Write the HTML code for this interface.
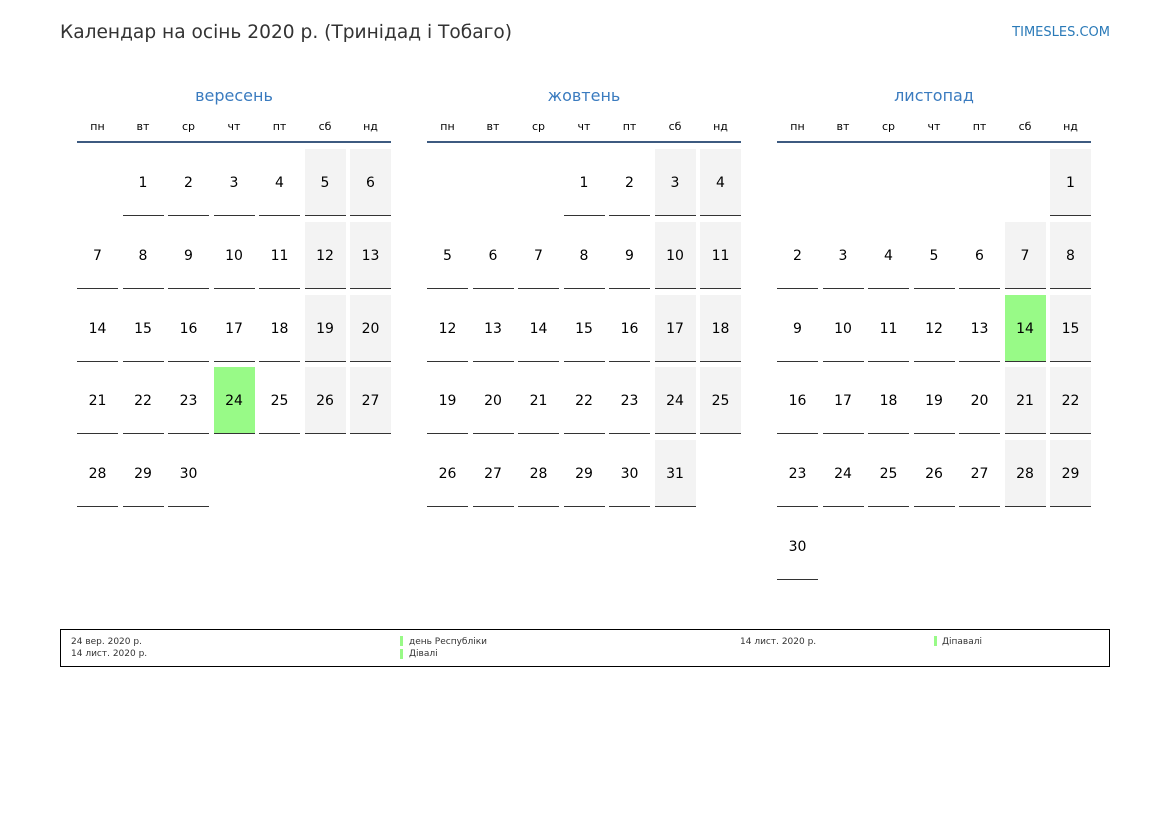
<!DOCTYPE html><html><head><meta charset="utf-8"><style>
body{margin:0;width:1169px;height:827px;background:#fff;font-family:"DejaVu Sans","Liberation Sans",sans-serif;position:relative;overflow:hidden;color:#000}
.t{position:absolute;left:60px;top:22px;font-size:18.6px;color:#333}
.l{position:absolute;right:59px;top:25px;font-size:13px;color:#2a7ab8}
.m{position:absolute;top:85px;width:314px}
.mn{text-align:center;font-size:16px;color:#3a7bbf;height:22px;line-height:22px}
.dh{display:grid;grid-template-columns:repeat(7,41px);column-gap:4.5px;margin-top:11px;font-size:11px;text-align:center;height:17px;border-bottom:2px solid #3d5a80;padding-bottom:6px;line-height:17px}
.g{display:grid;grid-template-columns:repeat(7,41px);column-gap:4.5px;grid-auto-rows:67px;row-gap:5.8px;margin-top:6px}
.g div{font-size:14px;text-align:center;line-height:68px;height:66px}
.g .f{border-bottom:1px solid #333}
.g .w{background:#f3f3f3}
.g .h{background:#98fa87}
.lg{position:absolute;left:60px;top:629px;width:1048px;height:36px;border:1px solid #000;font-size:9px;color:#333}
.lg span{position:absolute}
.bar{position:absolute;width:3px;height:10px;background:#98fa87}
</style></head><body>
<div class="t">Календар на осінь 2020 р. (Тринідад і Тобаго)</div>
<div class="l">TIMESLES.COM</div>

<div class="m" style="left:77px"><div class="mn">вересень</div>
<div class="dh"><span>пн</span><span>вт</span><span>ср</span><span>чт</span><span>пт</span><span>сб</span><span>нд</span></div>
<div class="g">
<div></div><div class="f">1</div><div class="f">2</div><div class="f">3</div><div class="f">4</div><div class="f w">5</div><div class="f w">6</div>
<div class="f">7</div><div class="f">8</div><div class="f">9</div><div class="f">10</div><div class="f">11</div><div class="f w">12</div><div class="f w">13</div>
<div class="f">14</div><div class="f">15</div><div class="f">16</div><div class="f">17</div><div class="f">18</div><div class="f w">19</div><div class="f w">20</div>
<div class="f">21</div><div class="f">22</div><div class="f">23</div><div class="f h">24</div><div class="f">25</div><div class="f w">26</div><div class="f w">27</div>
<div class="f">28</div><div class="f">29</div><div class="f">30</div>
</div></div>

<div class="m" style="left:427px"><div class="mn">жовтень</div>
<div class="dh"><span>пн</span><span>вт</span><span>ср</span><span>чт</span><span>пт</span><span>сб</span><span>нд</span></div>
<div class="g">
<div></div><div></div><div></div><div class="f">1</div><div class="f">2</div><div class="f w">3</div><div class="f w">4</div>
<div class="f">5</div><div class="f">6</div><div class="f">7</div><div class="f">8</div><div class="f">9</div><div class="f w">10</div><div class="f w">11</div>
<div class="f">12</div><div class="f">13</div><div class="f">14</div><div class="f">15</div><div class="f">16</div><div class="f w">17</div><div class="f w">18</div>
<div class="f">19</div><div class="f">20</div><div class="f">21</div><div class="f">22</div><div class="f">23</div><div class="f w">24</div><div class="f w">25</div>
<div class="f">26</div><div class="f">27</div><div class="f">28</div><div class="f">29</div><div class="f">30</div><div class="f w">31</div>
</div></div>

<div class="m" style="left:777px"><div class="mn">листопад</div>
<div class="dh"><span>пн</span><span>вт</span><span>ср</span><span>чт</span><span>пт</span><span>сб</span><span>нд</span></div>
<div class="g">
<div></div><div></div><div></div><div></div><div></div><div></div><div class="f w">1</div>
<div class="f">2</div><div class="f">3</div><div class="f">4</div><div class="f">5</div><div class="f">6</div><div class="f w">7</div><div class="f w">8</div>
<div class="f">9</div><div class="f">10</div><div class="f">11</div><div class="f">12</div><div class="f">13</div><div class="f h">14</div><div class="f w">15</div>
<div class="f">16</div><div class="f">17</div><div class="f">18</div><div class="f">19</div><div class="f">20</div><div class="f w">21</div><div class="f w">22</div>
<div class="f">23</div><div class="f">24</div><div class="f">25</div><div class="f">26</div><div class="f">27</div><div class="f w">28</div><div class="f w">29</div>
<div class="f">30</div>
</div></div>

<div class="lg">
<span style="left:10px;top:7px">24 вер. 2020 р.</span>
<span style="left:10px;top:19px">14 лист. 2020 р.</span>
<div class="bar" style="left:339px;top:6px"></div><span style="left:348px;top:7px">день Республіки</span>
<div class="bar" style="left:339px;top:19px"></div><span style="left:348px;top:19px">Дівалі</span>
<span style="left:679px;top:7px">14 лист. 2020 р.</span>
<div class="bar" style="left:873px;top:6px"></div><span style="left:881px;top:7px">Діпавалі</span>
</div>
</body></html>
